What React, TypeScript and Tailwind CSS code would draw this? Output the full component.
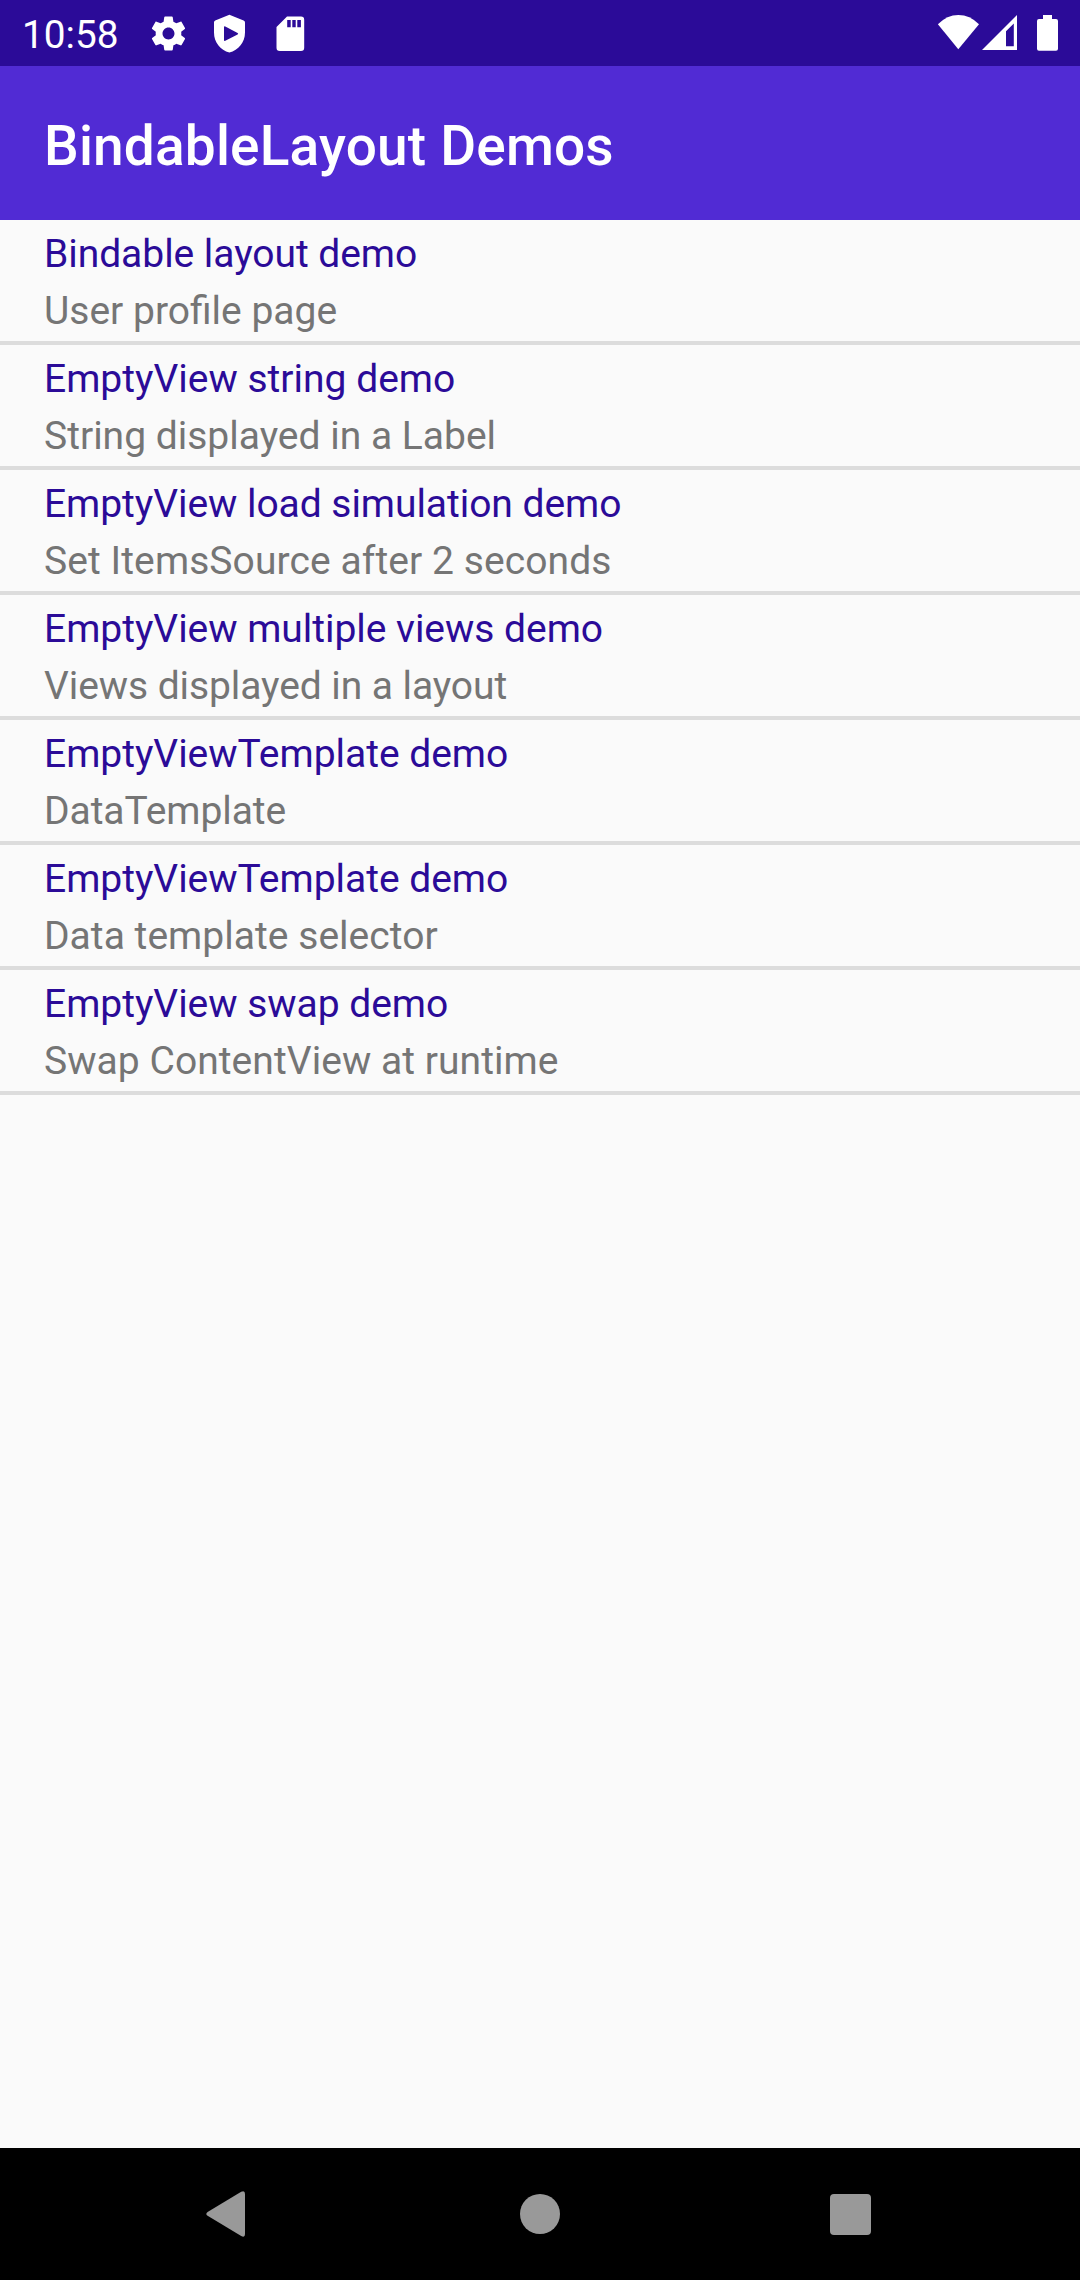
const demos = [
  { title: "Bindable layout demo", titleClass: "tracking-[-0.05px]", detail: "User profile page", detailClass: "" },
  { title: "EmptyView string demo", titleClass: "", detail: "String displayed in a Label", detailClass: "" },
  { title: "EmptyView load simulation demo", titleClass: "tracking-[-0.05px]", detail: "Set ItemsSource after 2 seconds", detailClass: "tracking-[0.08px]" },
  { title: "EmptyView multiple views demo", titleClass: "tracking-[-0.03px]", detail: "Views displayed in a layout", detailClass: "tracking-[-0.08px]" },
  { title: "EmptyViewTemplate demo", titleClass: "tracking-[-0.03px]", detail: "DataTemplate", detailClass: "tracking-[-0.08px]" },
  { title: "EmptyViewTemplate demo", titleClass: "tracking-[-0.03px]", detail: "Data template selector", detailClass: "tracking-[0.03px]" },
  { title: "EmptyView swap demo", titleClass: "tracking-[-0.03px]", detail: "Swap ContentView at runtime", detailClass: "tracking-[0.05px]" },
];

function StatusBar() {
  return (
    <div className="flex h-[66px] shrink-0 items-center justify-between bg-[#2b0b98] pr-[21px] pl-[22px] text-white">
      <div className="flex items-center">
        <span className="w-[126px] pt-[4px] text-[38.75px] leading-[62px]">10:58</span>
        <svg className="mr-[20px] h-[41px] w-[41px]" viewBox="0 0 24 24" fill="currentColor">
          <path d="M19.43 12.98c.04-.32.07-.64.07-.98s-.03-.66-.07-.98l2.11-1.65c.19-.15.24-.42.12-.64l-2-3.46c-.12-.22-.39-.3-.61-.22l-2.49 1c-.52-.4-1.08-.73-1.69-.98l-.38-2.65C14.46 2.18 14.25 2 14 2h-4c-.25 0-.46.18-.49.42l-.38 2.65c-.61.25-1.17.59-1.69.98l-2.49-1c-.23-.09-.49 0-.61.22l-2 3.46c-.13.22-.07.49.12.64l2.11 1.65c-.04.32-.07.65-.07.98s.03.66.07.98l-2.11 1.65c-.19.15-.24.42-.12.64l2 3.46c.12.22.39.3.61.22l2.49-1c.52.4 1.08.73 1.69.98l.38 2.65c.03.24.24.42.49.42h4c.25 0 .46-.18.49-.42l.38-2.65c.61-.25 1.17-.59 1.69-.98l2.49 1c.23.09.49 0 .61-.22l2-3.46c.12-.22.07-.49-.12-.64l-2.11-1.65zM12 15.5c-1.93 0-3.5-1.57-3.5-3.5s1.57-3.5 3.5-3.5 3.5 1.57 3.5 3.5-1.57 3.5-3.5 3.5z" />
        </svg>
        <svg className="mr-[20px] h-[41px] w-[41px]" viewBox="0 0 41 41" fill="currentColor" fillRule="evenodd">
          <path d="M20.4 1.8 L34.6 7.4 Q36 8 36 9.5 V19.5 C36 29.5 29.5 37 20.4 39.6 C11.3 37 5 29.5 5 19.5 V9.5 Q5 8 6.2 7.4 Z M15 14.2 V27 Q15 28.4 16.3 27.8 L28.6 21.6 Q29.8 20.8 28.6 20 L16.3 13.5 Q15 12.9 15 14.2 Z" />
        </svg>
        <svg className="h-[41px] w-[41px]" viewBox="0 0 41 41" fill="currentColor" fillRule="evenodd">
          <path d="M17 3.6 H31 Q34.2 3.6 34.2 6.8 V34.7 Q34.2 38 31 38 H9.8 Q6.5 38 6.5 34.7 V14 Z M17.2 7 V14.2 H20.7 V7 Z M22.3 7 V14.2 H25.7 V7 Z M27.3 7 V14.2 H30.9 V7 Z" />
        </svg>
      </div>
      <div className="flex items-center">
        <svg className="mr-[2px] h-[36px] w-[42px]" viewBox="937 15 42 36" fill="currentColor">
          <path d="M958.3 49.3 L937.9 24.3 Q947 15 958.3 15 Q970 15 979 24.3 Z" />
        </svg>
        <svg className="mr-[20px] h-[36px] w-[36px]" viewBox="981 15 36 36" fill="currentColor" fillRule="evenodd">
          <path d="M982 50 L1017 15 V50 Z M1006 31.3 V46.2 H1013.8 V23.6 Z" />
        </svg>
        <svg className="h-[36px] w-[22px]" viewBox="1037 15 22 36" fill="currentColor">
          <path d="M1043 15 H1052 V19 H1056 Q1058 19 1058 21 V48.7 Q1058 50.7 1056 50.7 H1039 Q1037 50.7 1037 48.7 V21 Q1037 19 1039 19 H1043 Z" />
        </svg>
      </div>
    </div>
  );
}

function NavigationBar() {
  return (
    <div className="flex h-[132px] shrink-0 items-center justify-between bg-black pr-[209px] pl-[205px] text-[#999999]">
      <svg className="h-[46px] w-[41px]" viewBox="0 0 41 46" fill="currentColor">
        <path d="M36.2 0.8 Q40 -1 40 3 V43 Q40 47 36.2 45 L2.6 24.8 Q0 22.9 2.6 21 Z" />
      </svg>
      <div className="ml-[4px] h-[40px] w-[40px] rounded-full bg-[#999999]" />
      <div className="h-[41px] w-[41px] rounded-[4px] bg-[#999999]" />
    </div>
  );
}

export default function App() {
  return (
    <div className="flex h-[2280px] w-[1080px] flex-col bg-[#fafafa] font-['Roboto',sans-serif]">
      <StatusBar />
      <header className="flex h-[154px] shrink-0 items-center bg-[#512bd4] pt-[5px] pl-[44px]">
        <h1 className="text-[55px] leading-[64px] font-medium tracking-[0.17px] text-white">BindableLayout Demos</h1>
      </header>
      <main className="flex-1">
        {demos.map((demo, index) => (
          <div key={index} className="h-[125px] border-b-4 border-[#dcdcdc] pt-[6px] pl-[44px] text-[39px] leading-[57px]">
            <p className={`text-[#2b0b98] ${demo.titleClass}`}>{demo.title}</p>
            <p className={`text-[#757575] ${demo.detailClass}`}>{demo.detail}</p>
          </div>
        ))}
      </main>
      <NavigationBar />
    </div>
  );
}
